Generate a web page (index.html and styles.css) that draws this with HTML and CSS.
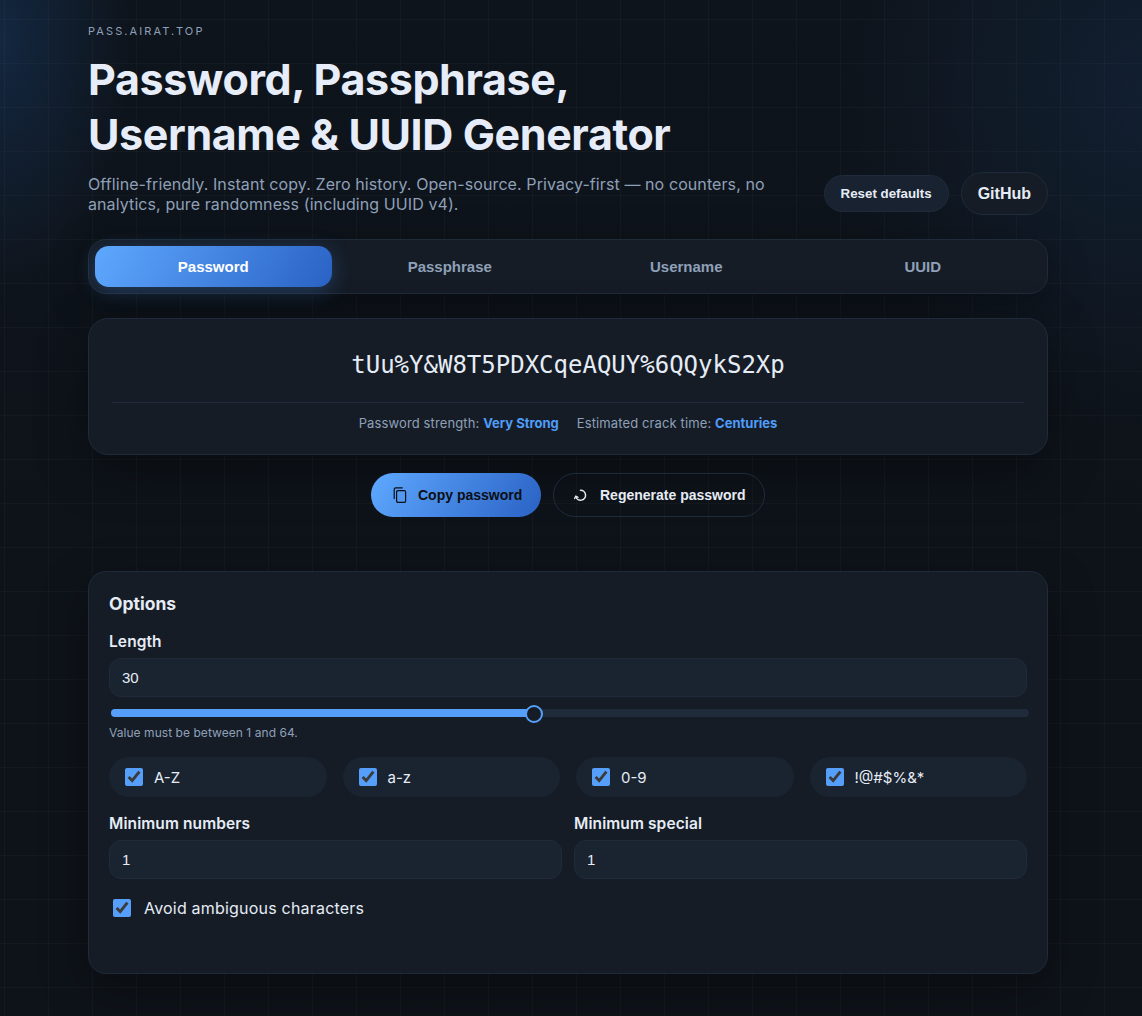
FILE: index.html
```html
<!DOCTYPE html>
<html lang="en">
<head>
<meta charset="utf-8">
<title>Password, Passphrase, Username &amp; UUID Generator</title>
<link rel="stylesheet" href="styles.css">
</head>
<body>
<main class="page">
  <header class="hero">
    <p class="eyebrow">PASS.AIRAT.TOP</p>
    <h1 class="title">Password, Passphrase,<br>Username &amp; UUID Generator</h1>
    <div class="hero-row">
      <p class="tagline">Offline-friendly. Instant copy. Zero history. Open-source. Privacy-first — no counters, no<br>analytics, pure randomness (including UUID v4).</p>
      <div class="hero-actions">
        <button class="btn-reset">Reset defaults</button>
        <a class="btn-github" href="#">GitHub</a>
      </div>
    </div>
  </header>

  <nav class="tabs">
    <button class="tab tab-active">Password</button>
    <button class="tab">Passphrase</button>
    <button class="tab">Username</button>
    <button class="tab">UUID</button>
  </nav>

  <section class="output-card">
    <div class="output-value">tUu%Y&amp;W8T5PDXCqeAQUY%6QQykS2Xp</div>
    <div class="output-meta">
      <span>Password strength: <strong>Very Strong</strong></span>
      <span>Estimated crack time: <strong>Centuries</strong></span>
    </div>
  </section>

  <div class="cta-row">
    <button class="cta cta-primary">
      <svg class="cta-icon" viewBox="0 0 16 16" fill="none" stroke="currentColor" stroke-width="1.2" stroke-linecap="round" stroke-linejoin="round"><rect x="4.6" y="3.6" width="9" height="11.8" rx="1.3"/><path d="M2.2 11.6V2.2A1.5 1.5 0 0 1 3.7.8h6.6"/></svg>
      <span>Copy password</span>
    </button>
    <button class="cta cta-ghost">
      <svg class="cta-icon" viewBox="0 0 16 16" fill="none" stroke="currentColor" stroke-width="1.5" stroke-linecap="round" stroke-linejoin="round"><path d="M7.5 3.2a5 5 0 1 1-4.8 6.2"/><path d="M1.6 11.6l1.1-2.4 2.3 1.2" stroke-width="1.3"/></svg>
      <span>Regenerate password</span>
    </button>
  </div>

  <section class="options">
    <h2 class="options-title">Options</h2>
    <label class="field-label" for="len">Length</label>
    <input class="text-input" id="len" type="text" value="30">
    <input class="slider" type="range" min="1" max="64" value="30" aria-label="Length">
    <p class="hint">Value must be between 1 and 64.</p>
    <div class="chips">
      <label class="chip"><input type="checkbox" checked><span>A-Z</span></label>
      <label class="chip"><input type="checkbox" checked><span>a-z</span></label>
      <label class="chip"><input type="checkbox" checked><span>0-9</span></label>
      <label class="chip"><input type="checkbox" checked><span>!@#$%&amp;*</span></label>
    </div>
    <div class="min-grid">
      <div>
        <label class="field-label" for="minn">Minimum numbers</label>
        <input class="text-input" id="minn" type="text" value="1">
      </div>
      <div>
        <label class="field-label" for="mins">Minimum special</label>
        <input class="text-input" id="mins" type="text" value="1">
      </div>
    </div>
    <label class="avoid"><input type="checkbox" checked><span>Avoid ambiguous characters</span></label>
  </section>
</main>
</body>
</html>
```
FILE: styles.css
```css
* { box-sizing: border-box; }
html, body { margin: 0; padding: 0; }
body {
  height: 1016px;
  overflow: hidden;
  color: #e6ecf5;
  font-family: Inter, "Liberation Sans", sans-serif;
  background-color: #0e1319;
  background-image:
    linear-gradient(rgba(255,255,255,.022) 1px, transparent 1px),
    linear-gradient(90deg, rgba(255,255,255,.022) 1px, transparent 1px),
    radial-gradient(ellipse 130px 260px at 0 40px, rgba(30,80,140,.32), transparent 100%),
    radial-gradient(ellipse 300px 340px at 100% 90px, rgba(30,75,130,.2), transparent 100%),
    linear-gradient(180deg, #0e141c 0, #0e1319 60%);
  background-size: 44px 44px, 44px 44px, auto, auto, auto;
  background-position: 0 19px, 4px 0, 0 0, 0 0, 0 0;
}
.page { width: 960px; margin-left: 88px; padding-top: 24px; }

.eyebrow { margin: 0; font-size: 11px; line-height: 14px; letter-spacing: 2.1px; color: #8fa0b8; }
.title { margin: 14px 0 0; font-size: 43px; line-height: 55px; font-weight: 700; letter-spacing: -0.4px; color: #e6edf8; }
.hero-row { display: flex; justify-content: space-between; align-items: center; margin-top: 10px; }
.tagline { margin: 0; font-size: 16px; line-height: 20px; letter-spacing: 0.09px; color: #8fa0b8; }
.hero-actions { display: flex; align-items: center; gap: 12px; }
.btn-reset {
  height: 37px; padding: 0 16px; border-radius: 19px;
  border: 1px solid #1f2b3b; background: #182230; color: #e6ecf5;
  font: 700 13.33px "Liberation Sans", sans-serif;
}
.btn-github {
  display: flex; align-items: center; height: 43px; padding: 0 16px; border-radius: 22px;
  border: 1px solid #1f2b3b; background: #151c26; color: #e6ecf5;
  font: 700 16px "Liberation Sans", sans-serif; text-decoration: none;
}

.tabs {
  display: grid; grid-template-columns: repeat(4, 1fr);
  margin-top: 24px; padding: 6px; height: 55px;
  border: 1px solid #1f2b3b; border-radius: 18px; background: #151c26;
  box-shadow: 0 10px 40px rgba(0,0,0,.3);
}
.tab {
  border: 0; background: none; border-radius: 14px; color: #8fa0b8;
  font: 700 15px "Liberation Sans", sans-serif;
}
.tab-active {
  color: #fff;
  background: linear-gradient(120deg, #5ea8ff, #2a62c4);
  box-shadow: 0 4px 20px rgba(79,156,249,.28);
}

.output-card {
  margin-top: 24px; padding: 24px 23px 0; height: 137px;
  border: 1px solid #1f2b3b; border-radius: 20px; background: #151c26;
  box-shadow: 0 16px 50px rgba(0,0,0,.35);
}
.output-value {
  height: 60px; border-bottom: 1px solid #1f2b3b; text-align: center;
  font: 400 24px/44px "DejaVu Sans Mono", monospace; color: #e6ecf5;
}
.output-meta { display: flex; justify-content: center; gap: 18px; margin-top: 12px; font-size: 13px; line-height: 16px; letter-spacing: .12px; color: #8fa0b8; }
.output-meta strong { color: #4f9cf9; font-weight: 700; letter-spacing: 0; }

.cta-row { display: flex; justify-content: center; gap: 12px; margin-top: 18px; }
.cta {
  display: flex; align-items: center; height: 44px; border-radius: 22px; white-space: nowrap;
  font: 700 14px "Liberation Sans", sans-serif;
}
.cta-icon { width: 16px; height: 16px; flex: none; }
.cta-primary { width: 170px; padding: 0 0 0 21px; gap: 10px; border: 0; color: #0b0f14; background: linear-gradient(120deg, #5ea8ff, #2a62c4); }
.cta-ghost { width: 212px; padding: 0 0 0 19px; gap: 11px; border: 1px solid #1f2b3b; background: transparent; color: #e6ecf5; }

.options {
  margin-top: 54px; padding: 20px 20px 0; height: 403px;
  border: 1px solid #1f2b3b; border-radius: 18px; background: #151c26;
  box-shadow: 0 16px 50px rgba(0,0,0,.3);
}
.options-title { margin: 0; font-size: 17.5px; line-height: 24px; font-weight: 700; color: #e6ecf5; }
.field-label { display: block; font-size: 15.5px; line-height: 20px; font-weight: 600; letter-spacing: .1px; color: #e6ecf5; }
.options-title + .field-label { margin-top: 16px; }
.text-input {
  display: block; width: 100%; height: 39px; margin-top: 6px; padding: 0 12px;
  border: 1px solid #1f2b3b; border-radius: 12px; background: #1a2330;
  color: #e6ecf5; font: 400 15px "Liberation Sans", sans-serif; outline: 0;
}
.slider {
  -webkit-appearance: none; appearance: none; display: block;
  width: 918px; height: 8px; margin: 12px 0 0 2px; border-radius: 4px;
  background: linear-gradient(90deg, #559ffa 46%, #1f2a3a 46%);
}
.slider::-webkit-slider-thumb {
  -webkit-appearance: none; width: 18px; height: 18px; margin-top: 0;
  border-radius: 50%; border: 2px solid #559ffa; background: #151c26;
  transform: translateY(1px);
}
.hint { margin: 9px 0 0; font-size: 12px; line-height: 14px; letter-spacing: .05px; color: #8fa0b8; }
.chips { display: grid; grid-template-columns: repeat(4, 1fr); gap: 16px; margin-top: 17px; }
.chip {
  display: flex; align-items: center; gap: 11px; height: 40px; padding: 0 16px;
  border-radius: 20px; background: #1a2330; font-size: 15px; color: #e6ecf5;
}
.chip input, .avoid input { width: 18px; height: 18px; margin: 0; accent-color: #559ffa; flex: none; }
.min-grid { display: grid; grid-template-columns: 1fr 1fr; gap: 12px; margin-top: 17px; }
.avoid { display: flex; align-items: center; gap: 13px; margin-top: 19px; padding-left: 4px; font-size: 16px; line-height: 20px; letter-spacing: .2px; color: #e6ecf5; }
```
